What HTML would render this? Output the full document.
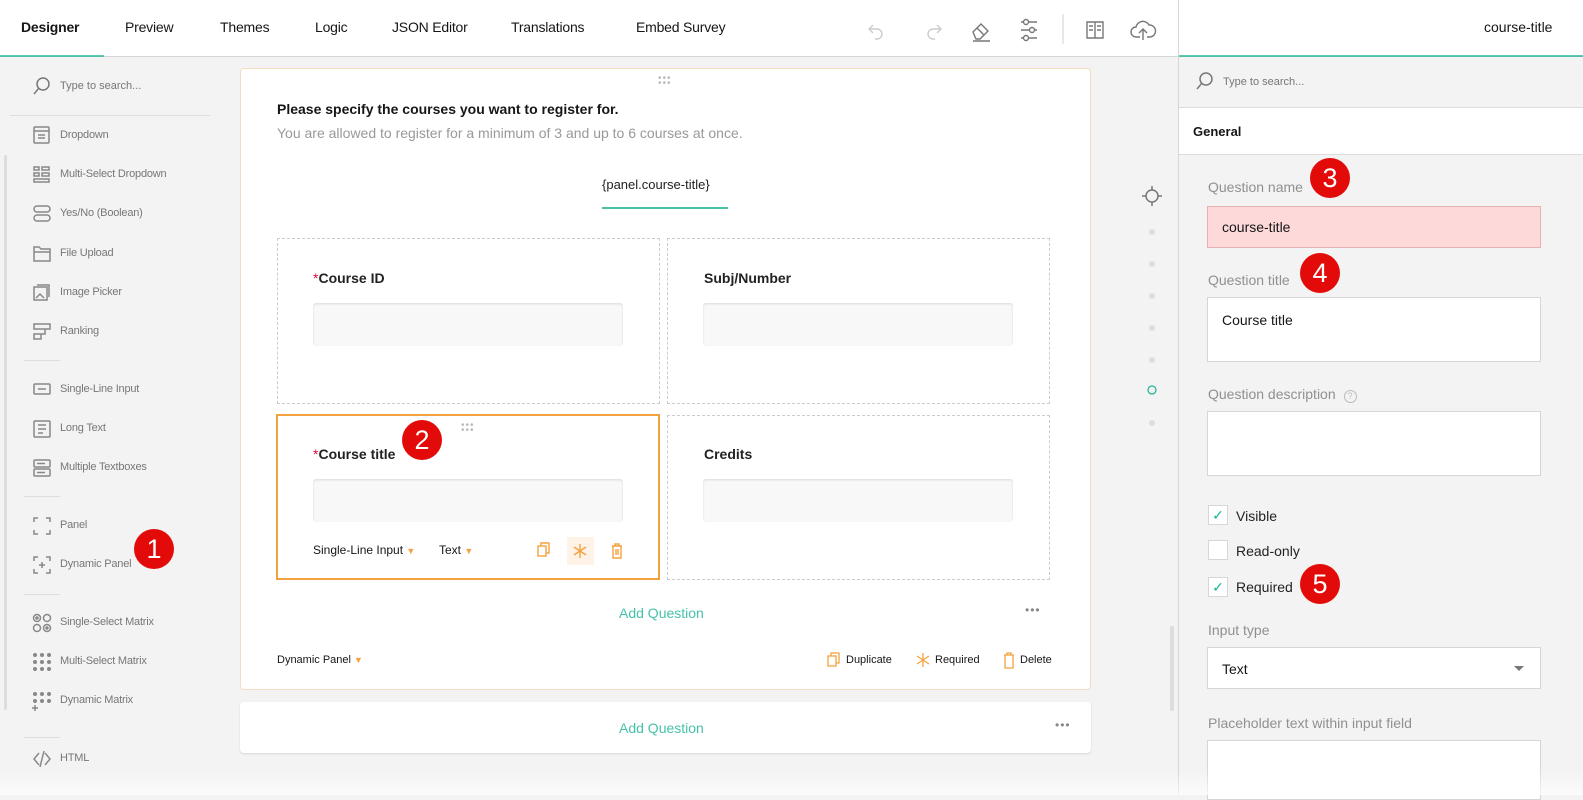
<!DOCTYPE html>
<html><head><meta charset="utf-8"><style>
*{box-sizing:border-box;margin:0;padding:0}
body{width:1583px;height:795px;overflow:hidden;background:#f3f3f3;font-family:"Liberation Sans",sans-serif;position:relative;color:#161616}
.a{position:absolute;white-space:nowrap}
.nav{font-size:14px;top:19px;color:#161616;letter-spacing:-0.2px}
.side{font-size:11px;color:#777;left:60px;letter-spacing:-0.2px}
.ico{position:absolute;left:32px}
.sep{position:absolute;left:24px;width:36px;height:1px;background:#ddd}
.badge{position:absolute;width:40px;height:40px;border-radius:50%;background:#e30a0a;color:#fff;font-size:27px;text-align:center;line-height:40px}
.inp{position:absolute;background:#f8f8f8;border-radius:3px;box-shadow:inset 0 1px 2px rgba(0,0,0,.12)}
.qt{font-size:14px;font-weight:bold;color:#222}
.lbl{font-size:14px;color:#909090}
.box{position:absolute;background:#fff;border:1px solid #d6d6d6}
.cb{position:absolute;left:1208px;width:20px;height:20px;background:#fff;border:1px solid #d6d6d6}
</style></head><body>
<!-- top bar -->
<div class="a" style="left:0;top:0;width:1583px;height:57px;background:#fff;border-bottom:1px solid #d6d6d6"></div>
<div class="a" style="left:0;top:55px;width:104px;height:2px;background:#19b394;opacity:.7"></div>
<div class="a nav" style="left:21px;font-weight:bold">Designer</div>
<div class="a nav" style="left:125px">Preview</div>
<div class="a nav" style="left:220px">Themes</div>
<div class="a nav" style="left:315px">Logic</div>
<div class="a nav" style="left:392px">JSON Editor</div>
<div class="a nav" style="left:511px">Translations</div>
<div class="a nav" style="left:636px">Embed Survey</div>
<svg class="a" style="left:860px;top:14px" width="310" height="30" fill="none" stroke-width="1.4">
 <path d="M13 11 l-4 4 4 4 M9 15 h8 a5 5 0 0 1 0 10 h-2" stroke="#ccc"/>
 <path d="M77 11 l4 4 -4 4 M81 15 h-8 a5 5 0 0 0 0 10 h2" stroke="#ccc"/>
 <path d="M113 18 l8 -8 7 7 -8 8 h-4 z M117 14 l7 7 M113 27 h17" stroke="#777"/>
 <path d="M161 8 h16 M161 16 h16 M161 24 h16" stroke="#777"/><circle cx="166" cy="8" r="2.5" fill="#fff" stroke="#777"/><circle cx="172" cy="16" r="2.5" fill="#fff" stroke="#777"/><circle cx="166" cy="24" r="2.5" fill="#fff" stroke="#777"/>
 <path d="M203 0 v30" stroke="#ddd"/>
 <path d="M227 8 h8 v16 h-8 z M235 8 h8 v16 h-8 z M229 12 h4 M229 16 h4 M237 12 h4 M237 16 h4" stroke="#777"/>
 <path d="M280 23 h-4 a5 5 0 0 1 0-10 a7 7 0 0 1 13-2 a5 5 0 0 1 1 12 h-3 M283 26 v-11 M279 19 l4-4 4 4" stroke="#777"/>
</svg>
<div class="a" style="left:1178px;top:0;width:1px;height:795px;background:#d6d6d6"></div>
<div class="a" style="left:1179px;top:55px;width:404px;height:2px;background:#19b394;opacity:.7"></div>
<div class="a" style="left:1484px;top:19px;font-size:14px">course-title</div>

<!-- left toolbox -->
<svg class="a" style="left:32px;top:76px" width="20" height="20" fill="none" stroke="#777" stroke-width="1.5"><circle cx="11" cy="8" r="6"/><path d="M7 12 l-5 6"/></svg>
<div class="a" style="left:60px;top:80px;font-size:11px;color:#777">Type to search...</div>
<div class="a" style="left:10px;top:115px;width:200px;height:1px;background:#ddd"></div>
<div class="a" style="left:4px;top:155px;width:3px;height:555px;background:#ddd;border-radius:2px"></div>
<svg class="a" style="left:32px;top:125px" width="22" height="660" fill="none" stroke="#888" stroke-width="1.5">
 <rect x="2" y="2" width="15" height="16" rx="1"/><path d="M2 6 h15 M6 10 h7 M6 13 h7"/>
 <g transform="translate(0,40)"><rect x="2" y="2" width="5" height="3"/><rect x="10" y="2" width="7" height="3"/><rect x="2" y="8" width="5" height="3"/><rect x="10" y="8" width="7" height="3"/><rect x="2" y="14" width="15" height="3"/></g>
 <g transform="translate(0,79)"><rect x="2" y="2" width="16" height="6" rx="3"/><rect x="2" y="11" width="16" height="6" rx="3"/></g>
 <g transform="translate(0,119)"><path d="M2 3 h5 l2 2 h9 v12 h-16 z M2 8 h16"/></g>
 <g transform="translate(0,158)"><rect x="2" y="4" width="13" height="13"/><path d="M5 2 h12 v12"/><path d="M4 15 l4-4 4 4"/></g>
 <g transform="translate(0,197)"><path d="M2 2 h16 v5 h-16 z M2 7 h11 v5 h-11 M2 12 h7 v5 h-7 z"/></g>
 <g transform="translate(0,255)"><rect x="2" y="4" width="16" height="10" rx="1"/><path d="M6 9 h8"/></g>
 <g transform="translate(0,294)"><rect x="2" y="2" width="16" height="16" rx="1"/><path d="M6 6 h8 M6 10 h8 M6 14 h5"/></g>
 <g transform="translate(0,333)"><rect x="2" y="2" width="16" height="7" rx="1"/><rect x="2" y="11" width="16" height="7" rx="1"/><path d="M5 5.5 h8 M5 14.5 h8"/></g>
 <g transform="translate(0,391)"><path d="M2 6 v-4 h4 M14 2 h4 v4 M18 14 v4 h-4 M6 18 h-4 v-4"/></g>
 <g transform="translate(0,430)"><path d="M2 6 v-4 h4 M14 2 h4 v4 M18 14 v4 h-4 M6 18 h-4 v-4 M10 7 v6 M7 10 h6"/></g>
 <g transform="translate(0,488)"><circle cx="5" cy="5" r="3.5"/><circle cx="15" cy="5" r="3.5"/><circle cx="5" cy="15" r="3.5"/><circle cx="15" cy="15" r="3.5"/><circle cx="5" cy="5" r="1" fill="#888"/><circle cx="15" cy="15" r="1" fill="#888"/></g>
 <g transform="translate(0,527)" fill="#888" stroke="none"><circle cx="3" cy="3" r="2"/><circle cx="10" cy="3" r="2"/><circle cx="17" cy="3" r="2"/><circle cx="3" cy="10" r="2"/><circle cx="10" cy="10" r="2"/><circle cx="17" cy="10" r="2"/><circle cx="3" cy="17" r="2"/><circle cx="10" cy="17" r="2"/><circle cx="17" cy="17" r="2"/></g>
 <g transform="translate(0,566)"><g fill="#888" stroke="none"><circle cx="3" cy="3" r="2"/><circle cx="10" cy="3" r="2"/><circle cx="17" cy="3" r="2"/><circle cx="3" cy="10" r="2"/><circle cx="10" cy="10" r="2"/><circle cx="17" cy="10" r="2"/></g><path d="M3 14 v6 M0 17 h6"/></g>
 <g transform="translate(0,624)"><path d="M7 4 l-5 6 5 6 M13 4 l5 6 -5 6 M12 2 l-4 16"/></g>
</svg>
<div class="a side" style="top:129px">Dropdown</div>
<div class="a side" style="top:168px">Multi-Select Dropdown</div>
<div class="a side" style="top:207px">Yes/No (Boolean)</div>
<div class="a side" style="top:247px">File Upload</div>
<div class="a side" style="top:286px">Image Picker</div>
<div class="a side" style="top:325px">Ranking</div>
<div class="sep" style="top:360px"></div>
<div class="a side" style="top:383px">Single-Line Input</div>
<div class="a side" style="top:422px">Long Text</div>
<div class="a side" style="top:461px">Multiple Textboxes</div>
<div class="sep" style="top:496px"></div>
<div class="a side" style="top:519px">Panel</div>
<div class="a side" style="top:558px">Dynamic Panel</div>
<div class="sep" style="top:594px"></div>
<div class="a side" style="top:616px">Single-Select Matrix</div>
<div class="a side" style="top:655px">Multi-Select Matrix</div>
<div class="a side" style="top:694px">Dynamic Matrix</div>
<div class="sep" style="top:737px"></div>
<div class="a side" style="top:752px">HTML</div>
<div class="badge" style="left:134px;top:529px">1</div>

<!-- main card -->
<div class="a" style="left:240px;top:68px;width:851px;height:622px;background:#fff;border:1px solid #f5dcc0;border-radius:4px"></div>
<div class="a" style="left:658px;top:76px;color:#bbb;font-size:10px;letter-spacing:1px;line-height:5px">•••<br>•••</div>
<div class="a" style="left:277px;top:101px;font-size:14px;font-weight:bold">Please specify the courses you want to register for.</div>
<div class="a" style="left:277px;top:125px;font-size:14px;color:#999">You are allowed to register for a minimum of 3 and up to 6 courses at once.</div>
<div class="a" style="left:602px;top:177px;font-size:13px;color:#222">{panel.course-title}</div>
<div class="a" style="left:602px;top:207px;width:126px;height:2px;background:#19b394;opacity:.8"></div>

<div class="a" style="left:277px;top:238px;width:383px;height:166px;border:1px dashed #ccc"></div>
<div class="a" style="left:667px;top:238px;width:383px;height:166px;border:1px dashed #ccc"></div>
<div class="a" style="left:667px;top:415px;width:383px;height:165px;border:1px dashed #ccc"></div>
<div class="a" style="left:276px;top:414px;width:384px;height:166px;border:2px solid #f4a23f"></div>
<div class="a qt" style="left:313px;top:270px"><span style="color:#e50a3e;font-weight:normal">*</span>Course ID</div>
<div class="a qt" style="left:704px;top:270px">Subj/Number</div>
<div class="a qt" style="left:313px;top:446px"><span style="color:#e50a3e;font-weight:normal">*</span>Course title</div>
<div class="a qt" style="left:704px;top:446px">Credits</div>
<div class="inp" style="left:313px;top:303px;width:310px;height:43px"></div>
<div class="inp" style="left:703px;top:303px;width:310px;height:43px"></div>
<div class="inp" style="left:313px;top:479px;width:310px;height:43px"></div>
<div class="inp" style="left:703px;top:479px;width:310px;height:43px"></div>
<div class="a" style="left:461px;top:423px;color:#bbb;font-size:10px;letter-spacing:1px;line-height:5px">•••<br>•••</div>
<div class="badge" style="left:402px;top:420px">2</div>
<div class="a" style="left:313px;top:543px;font-size:12px">Single-Line Input <span style="color:#f4a23f;font-size:9px">▼</span></div>
<div class="a" style="left:439px;top:543px;font-size:12px">Text <span style="color:#f4a23f;font-size:9px">▼</span></div>
<div class="a" style="left:567px;top:537px;width:27px;height:28px;background:#fef3e6"></div>
<svg class="a" style="left:535px;top:540px" width="100" height="22" fill="none" stroke="#f4a23f" stroke-width="1.4">
 <rect x="3" y="6" width="8" height="10"/><path d="M6 6 v-3 h8 v10 h-3"/>
 <path d="M45 4 v14 M39 7 l12 8 M51 7 l-12 8"/>
 <path d="M77 6 h10 M80 6 v-2 h4 v2 M78 6 v12 h8 v-12 M81 9 v6 M83 9 v6"/>
</svg>
<div class="a" style="left:619px;top:605px;font-size:14px;color:#19b394;opacity:.8">Add Question</div>
<div class="a" style="left:1025px;top:603px;color:#888;font-size:12px;letter-spacing:1px">•••</div>
<div class="a" style="left:277px;top:654px;font-size:11px">Dynamic Panel <span style="color:#f4a23f;font-size:9px">▼</span></div>
<svg class="a" style="left:826px;top:651px" width="200" height="18" fill="none" stroke="#f4a23f" stroke-width="1.3">
 <rect x="2" y="5" width="8" height="10"/><path d="M5 5 v-3 h8 v10 h-3"/>
 <path d="M97 2 v14 M91 5 l12 8 M103 5 l-12 8"/>
 <path d="M178 4 h10 M181 4 v-2 h4 v2 M179 4 v13 h8 v-13"/>
</svg>
<div class="a" style="left:846px;top:654px;font-size:11px">Duplicate</div>
<div class="a" style="left:935px;top:654px;font-size:11px">Required</div>
<div class="a" style="left:1020px;top:654px;font-size:11px">Delete</div>

<div class="a" style="left:240px;top:702px;width:851px;height:51px;background:#fff;border-radius:4px;box-shadow:0 1px 2px rgba(0,0,0,.12)"></div>
<div class="a" style="left:619px;top:720px;font-size:14px;color:#19b394;opacity:.8">Add Question</div>
<div class="a" style="left:1055px;top:718px;color:#888;font-size:12px;letter-spacing:1px">•••</div>

<!-- nav dots -->
<svg class="a" style="left:1140px;top:180px" width="24" height="250" fill="none">
 <circle cx="12" cy="16" r="6" stroke="#777" stroke-width="1.5"/><path d="M12 6 v4 M12 22 v4 M2 16 h4 M18 16 h4" stroke="#777" stroke-width="1.5"/>
 <g fill="#ddd"><circle cx="12" cy="52" r="3"/><circle cx="12" cy="84" r="3"/><circle cx="12" cy="116" r="3"/><circle cx="12" cy="148" r="3"/><circle cx="12" cy="180" r="3"/><circle cx="12" cy="243" r="3"/></g>
 <circle cx="12" cy="210" r="4" stroke="#19b394" stroke-width="1.2"/>
</svg>
<div class="a" style="left:1170px;top:626px;width:4px;height:85px;background:#ddd;border-radius:2px"></div>

<!-- right panel -->
<svg class="a" style="left:1195px;top:71px" width="20" height="20" fill="none" stroke="#777" stroke-width="1.5"><circle cx="11" cy="8" r="6"/><path d="M7 12 l-5 6"/></svg>
<div class="a" style="left:1223px;top:76px;font-size:11px;color:#777">Type to search...</div>
<div class="a" style="left:1179px;top:107px;width:404px;height:48px;background:#fff;border-top:1px solid #ddd;border-bottom:1px solid #ddd"></div>
<div class="a" style="left:1193px;top:124px;font-size:13px;font-weight:bold">General</div>
<div class="a lbl" style="left:1208px;top:179px">Question name</div>
<div class="badge" style="left:1310px;top:158px">3</div>
<div class="a" style="left:1207px;top:206px;width:334px;height:42px;background:#fdd9d9;border:1px solid #e6b0b0"></div>
<div class="a" style="left:1222px;top:219px;font-size:14px">course-title</div>
<div class="a lbl" style="left:1208px;top:272px">Question title</div>
<div class="badge" style="left:1300px;top:253px">4</div>
<div class="box" style="left:1207px;top:297px;width:334px;height:65px"></div>
<div class="a" style="left:1222px;top:312px;font-size:14px">Course title</div>
<div class="a lbl" style="left:1208px;top:386px">Question description <span style="display:inline-block;width:13px;height:13px;border:1px solid #bbb;border-radius:50%;font-size:9px;text-align:center;line-height:11px;color:#bbb;margin-left:4px">?</span></div>
<div class="box" style="left:1207px;top:411px;width:334px;height:65px"></div>
<div class="cb" style="top:505px;color:#19b394;font-size:14px;text-align:center;line-height:18px">✓</div>
<div class="a" style="left:1236px;top:508px;font-size:14px;color:#222">Visible</div>
<div class="cb" style="top:540px"></div>
<div class="a" style="left:1236px;top:543px;font-size:14px;color:#222">Read-only</div>
<div class="cb" style="top:577px;color:#19b394;font-size:14px;text-align:center;line-height:18px">✓</div>
<div class="a" style="left:1236px;top:579px;font-size:14px;color:#222">Required</div>
<div class="badge" style="left:1300px;top:564px">5</div>
<div class="a lbl" style="left:1208px;top:622px">Input type</div>
<div class="box" style="left:1207px;top:647px;width:334px;height:42px"></div>
<div class="a" style="left:1222px;top:661px;font-size:14px">Text</div>
<div class="a" style="left:1514px;top:666px;border-left:5px solid transparent;border-right:5px solid transparent;border-top:5px solid #777"></div>
<div class="a lbl" style="left:1208px;top:715px">Placeholder text within input field</div>
<div class="box" style="left:1207px;top:740px;width:334px;height:60px"></div>
<div class="a" style="left:0;top:770px;width:1583px;height:25px;background:linear-gradient(rgba(255,255,255,0),rgba(255,255,255,.7))"></div>
</body></html>
